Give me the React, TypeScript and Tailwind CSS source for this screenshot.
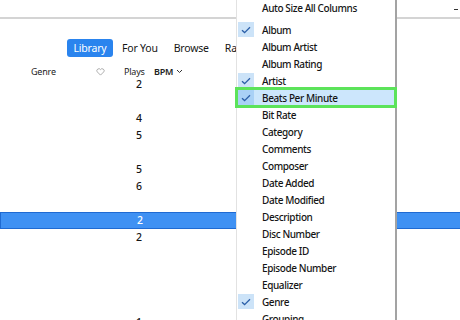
import React from "react";

const rows: { v: string; sel?: boolean }[] = [
  { v: "2" }, { v: "" }, { v: "4" }, { v: "5" }, { v: "" }, { v: "5" }, { v: "6" }, { v: "" },
  { v: "2", sel: true }, { v: "2" }, { v: "" }, { v: "" }, { v: "" }, { v: "" }, { v: "1" },
];

const items: { label: string; checked?: boolean; hi?: boolean }[] = [
  { label: "Album", checked: true },
  { label: "Album Artist" },
  { label: "Album Rating" },
  { label: "Artist", checked: true },
  { label: "Beats Per Minute", checked: true, hi: true },
  { label: "Bit Rate" },
  { label: "Category" },
  { label: "Comments" },
  { label: "Composer" },
  { label: "Date Added" },
  { label: "Date Modified" },
  { label: "Description" },
  { label: "Disc Number" },
  { label: "Episode ID" },
  { label: "Episode Number" },
  { label: "Equalizer" },
  { label: "Genre", checked: true },
  { label: "Grouping" },
];

function Check() {
  return (
    <svg width="10" height="8" viewBox="0 0 10 8" fill="none">
      <path d="M1 4.2 L3.6 6.6 L9 1.2" stroke="#2b5fa8" strokeWidth="1.3" />
    </svg>
  );
}

export default function App() {
  return (
    <div
      className="relative w-[460px] h-[320px] overflow-hidden bg-white text-[#151515]"
      style={{ fontFamily: '"Noto Sans", "Open Sans", sans-serif' }}
    >
      {/* top bar */}
      <div className="h-[19px] border-b-2 border-[#d4d4d4] bg-white flex justify-end items-start">
        <span className="mt-[9px] mr-[2px] w-[4px] h-[1px] bg-[#333]" />
      </div>
      {/* tabs */}
      <div className="pt-[20px] pl-[67px] flex items-center text-[10.5px] tracking-[-0.2px]">
        <div className="h-[18px] w-[46px] rounded-[3px] bg-[#2a84ee] text-white flex items-center justify-center leading-none">Library</div>
        <div className="h-[18px] ml-[9px] flex items-center leading-none">For You</div>
        <div className="h-[18px] ml-[16px] flex items-center leading-none">Browse</div>
        <div className="h-[18px] ml-[16px] flex items-center leading-none">Radio</div>
      </div>
      {/* column header */}
      <div className="mt-[10px] h-[9px] flex items-center text-[9px] tracking-[-0.2px] leading-none text-[#222]">
        <span className="ml-[31px] w-[65px]">Genre</span>
        <svg width="9" height="8" viewBox="0 0 10 9" fill="none">
          <path d="M5 8 L1.3 4.3 A2 2 0 0 1 5 1.8 A2 2 0 0 1 8.7 4.3 Z" stroke="#999" strokeWidth="0.9" />
        </svg>
        <span className="ml-[19px] w-[30px]">Plays</span>
        <span className="font-semibold">BPM</span>
        <svg className="ml-[3px]" width="7" height="5" viewBox="0 0 7 5" fill="none">
          <path d="M1 1 L3.5 3.5 L6 1" stroke="#333" strokeWidth="1" />
        </svg>
      </div>
      {/* rows */}
      <div className="flex flex-col">
        {rows.map((r, i) => (
          <div
            key={i}
            className={
              "h-[17px] flex items-center text-[10.5px] font-medium leading-none " +
              (r.sel ? "bg-[#3f91f3] border-y border-l border-[#1f6ad2] text-white" : "")
            }
          >
            <span className="w-[142px] text-right">{r.v}</span>
          </div>
        ))}
      </div>

      {/* context menu */}
      <div className="absolute left-[236px] top-0 w-[161px] h-[320px] bg-white border-l border-[#e2e2e2] border-r-2 border-r-[#a3a3a3] text-[10px] font-medium tracking-[-0.4px] text-[#151515]">
        <div className="h-[15px] flex items-center pl-[25px] leading-none">Auto Size All Columns</div>
        <div className="h-[6px]" />
        {items.map((it) => (
          <div
            key={it.label}
            className={
              "relative h-[17px] flex items-center leading-none " +
              (it.hi ? "z-10 bg-[#cce6fc] outline-[3px] outline-solid outline-[#5ce35a] outline-offset-[-1px]" : "")
            }
          >
            <div
              className={
                "ml-[1px] w-[16px] h-[15px] flex items-center justify-center " +
                (it.checked ? (it.hi ? "bg-[#a9d1f6]" : "bg-[#cce3f8]") : "")
              }
            >
              {it.checked ? <Check /> : null}
            </div>
            <span className="ml-[8px]">{it.label}</span>
          </div>
        ))}
      </div>
    </div>
  );
}
